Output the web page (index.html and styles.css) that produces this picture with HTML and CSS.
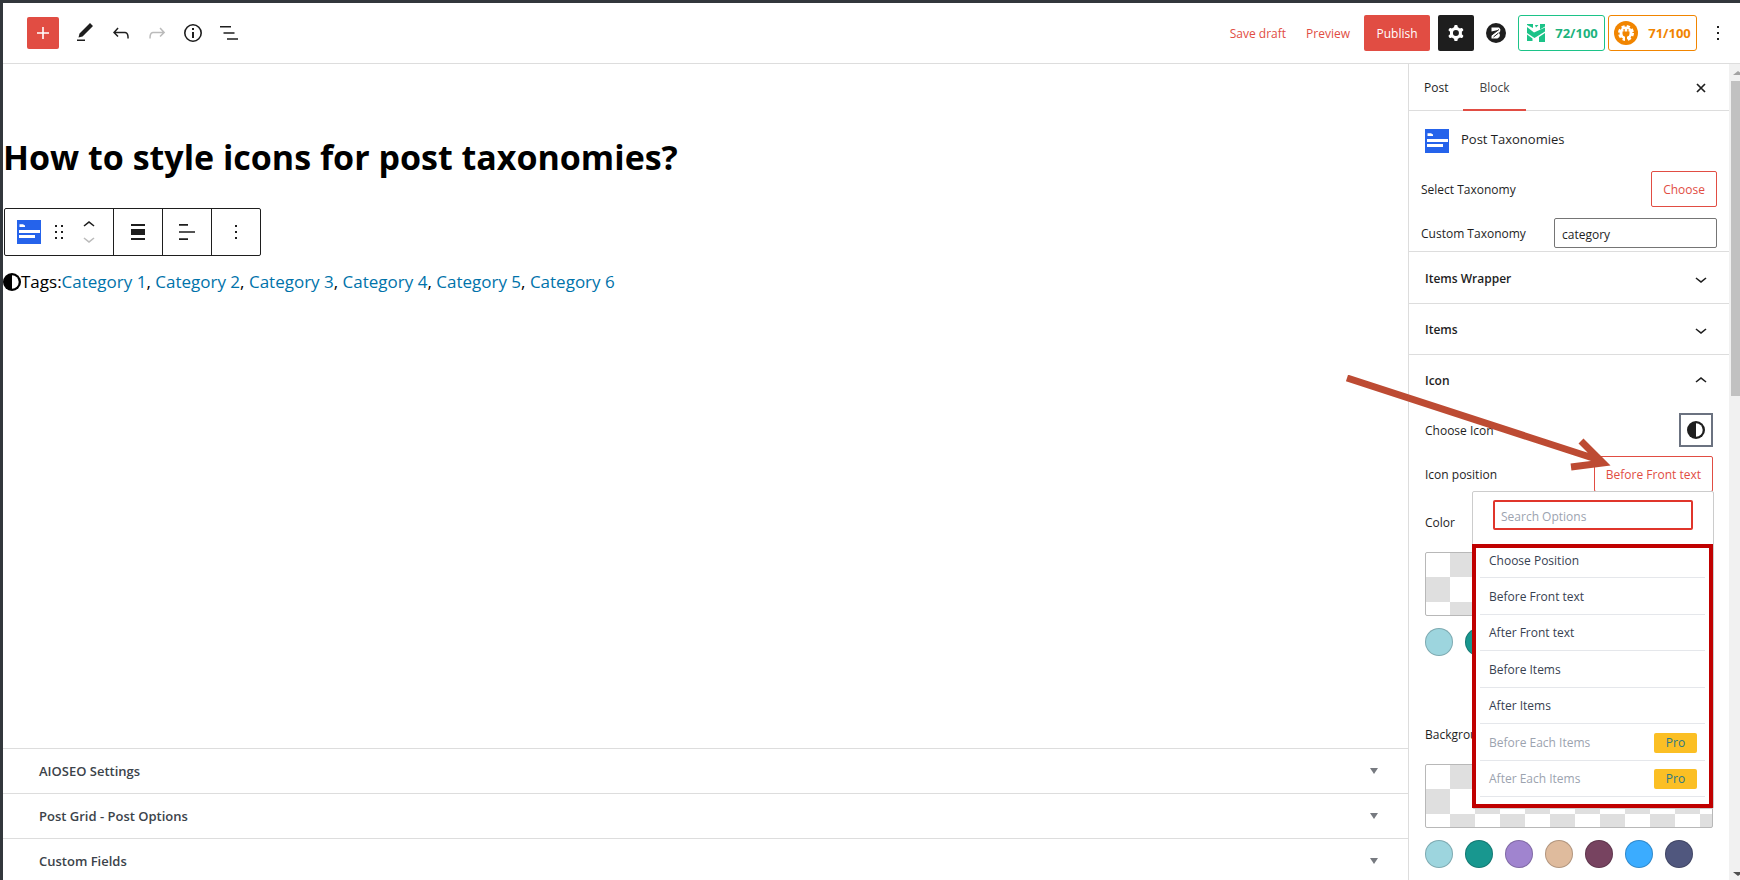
FILE: index.html
```html
<!DOCTYPE html>
<html lang="en">
<head>
<meta charset="utf-8">
<title>Edit Post</title>
<link rel="stylesheet" href="styles.css">
</head>
<body>
<svg class="defs" width="0" height="0" aria-hidden="true">
  <symbol id="tax" viewBox="0 0 24 24"><path fill="#2563eb" d="M0 0h24v24H0z"/><path fill="#fff" d="M2.500 7V4.300h3.500L8 5.500V7zM2 10h21v3H2zM2 15h16v3H2z"/></symbol>
  <symbol id="down" viewBox="0 0 24 24"><path d="M17.500 11.600 12 16l-5.500-4.400.9-1.200L12 14l4.500-3.600z"/></symbol>
  <symbol id="up" viewBox="0 0 24 24"><path d="M6.500 12.400 12 8l5.500 4.400-.9 1.200L12 10l-4.500 3.600z"/></symbol>
  <symbol id="more" viewBox="0 0 24 24"><path d="M13 19h-2v-2h2zM13 13h-2v-2h2zM13 7h-2V5h2z"/></symbol>
  <symbol id="half" viewBox="0 0 18 18"><circle cx="9" cy="9" r="9"/><path fill="#fff" d="M9 2.300a6.700 6.700 0 0 1 0 13.400z"/></symbol>
</svg>
<div class="app">
  <header class="topbar">
    <div class="tools">
      <button class="add" aria-label="Add block"><svg class="icon" viewBox="0 0 24 24"><path d="M18 11.200h-5.200V6h-1.600v5.200H6v1.600h5.200V18h1.600v-5.200H18z"/></svg></button>
      <button class="tool" aria-label="Tools"><svg class="icon" viewBox="0 0 24 24"><path d="m20 5-3-3L6.500 12.500l-1 4 4-1zM4 18.500h8V20H4z"/></svg></button>
      <button class="tool" aria-label="Undo"><svg class="icon" viewBox="0 0 24 24"><path d="M18.300 11.700c-.6-.6-1.400-.9-2.300-.9H6.700l2.900-3.300-1.100-1-4.500 5L8.500 16l1-1-2.700-2.700H16c.5 0 .9.2 1.300.5 1 1 1 3.400 1 4.500v.3h1.500v-.2c0-1.500 0-4.300-1.500-5.700z"/></svg></button>
      <button class="tool faded" aria-label="Redo"><svg class="icon" viewBox="0 0 24 24"><path d="M15.600 6.500l-1.100 1 2.900 3.300H8c-.9 0-1.700.3-2.300.9-1.400 1.500-1.400 4.200-1.400 5.600v.2h1.500v-.3c0-1.100 0-3.500 1-4.500.3-.3.7-.5 1.300-.5h9.200L14.500 15l1.100 1.100 4.600-4.600z"/></svg></button>
      <button class="tool" aria-label="Details"><svg class="icon" viewBox="0 0 24 24"><path fill-rule="evenodd" d="M12 3a9 9 0 1 0 0 18 9 9 0 0 0 0-18zm0 16.400a7.400 7.400 0 1 1 0-14.800 7.400 7.400 0 0 1 0 14.800zM11 17h2v-6h-2zM11 9h2V7h-2z"/></svg></button>
      <button class="tool" aria-label="List view"><svg class="icon" viewBox="0 0 24 24"><path d="M3 5h11v1.600H3zM6.500 11.200h11v1.600h-11zM10 17.200h11v1.600H10z"/></svg></button>
    </div>
    <div class="actions">
      <a class="draft" href="#">Save draft</a>
      <a class="preview" href="#">Preview</a>
      <button class="publish">Publish</button>
      <button class="settings" aria-label="Settings"><svg class="icon" viewBox="0 0 24 24"><path fill-rule="evenodd" d="M10.289 4.836A1 1 0 0111.275 4h1.306a1 1 0 01.987.836l.244 1.466c.787.26 1.503.679 2.108 1.218l1.393-.522a1 1 0 011.216.437l.653 1.130a1 1 0 01-.23 1.273l-1.148.944a6.025 6.025 0 010 2.435l1.149.946a1 1 0 01.23 1.272l-.653 1.130a1 1 0 01-1.216.437l-1.394-.522c-.605.54-1.320.958-2.108 1.218l-.244 1.466a1 1 0 01-.987.836h-1.306a1 1 0 01-.986-.836l-.244-1.466a5.995 5.995 0 01-2.108-1.218l-1.394.522a1 1 0 01-1.217-.436l-.653-1.131a1 1 0 01.23-1.272l1.149-.946a6.026 6.026 0 010-2.435l-1.148-.944a1 1 0 01-.23-1.272l.653-1.131a1 1 0 011.217-.437l1.393.522a5.994 5.994 0 012.108-1.218zM14.929 12a3 3 0 11-6 0 3 3 0 016 0z"/></svg></button>
      <button class="plugin" aria-label="Block plugin"><svg width="20" height="20" viewBox="0 0 20 20"><circle cx="10" cy="10" r="10" fill="#1e1e1e"/><path fill="#fff" d="M5.500 4.500H13q2.200 1.500 1.200 3.700L13 10q1.800 2 .4 4l-2 1.500H5.500v-3.300L12 7 5.500 8.500z"/><path stroke="#1e1e1e" stroke-width="1" fill="none" d="m5 12.500 8-6M7.500 14l5-4"/></svg></button>
      <button class="score good"><svg width="18" height="18" viewBox="0 0 18 18"><path fill="#1cc388" d="M0 0h6v4L0 1zM8 1h3.500L9 3.500zM13 0h5v2.500l-5 3zM0 3l7 5.500L18 3.500v4L7.500 14 0 9zM0 10.500l5.500 4V17H0zM12 13l6-4v9h-6z"/></svg>72/100</button>
      <button class="score fair"><svg width="24" height="24" viewBox="0 0 24 24"><circle cx="12" cy="12" r="12" fill="#f18500"/><circle cx="12" cy="12" r="6.500" fill="#fff"/><circle cx="12" cy="12" r="6.500" fill="none" stroke="#fff" stroke-width="3" stroke-dasharray="3 2.105"/><path fill="#f18500" d="M9.500 8h1.200v2.500h2.600V8h1.200v2.500h1V13q0 2-2.500 2.700V20h-2v-4.300Q8.500 15 8.500 13v-2.500h1z"/></svg>71/100</button>
      <button class="dots" aria-label="Options"><svg class="icon" viewBox="0 0 24 24"><use href="#more"/></svg></button>
    </div>
  </header>
  <div class="body">
    <main class="editor">
      <div class="canvas">
        <h1>How to style icons for post taxonomies?</h1>
        <div class="toolbar">
          <div class="group first">
            <svg class="icon"><use href="#tax"/></svg>
            <svg class="grip" width="8" height="14" viewBox="0 0 8 14"><path d="M0 0h2v2H0zM6 0h2v2H6zM0 6h2v2H0zM6 6h2v2H6zM0 12h2v2H0zM6 12h2v2H6z"/></svg>
            <div class="movers">
              <button aria-label="Move up"><svg width="24" height="16" viewBox="0 3 24 16"><use href="#up" width="24" height="24"/></svg></button>
              <button class="faded" aria-label="Move down"><svg width="24" height="16" viewBox="0 5 24 16"><use href="#down" width="24" height="24"/></svg></button>
            </div>
          </div>
          <button class="group" aria-label="Align"><svg class="icon" viewBox="0 0 24 24"><path d="M5 4h14v2H5zM5 9h14v6H5zM5 18h14v2H5z"/></svg></button>
          <button class="group" aria-label="Align text"><svg class="icon" viewBox="0 0 24 24"><path d="M4 4h9v1.700H4zM4 11.200h16v1.600H4zM4 18.300h9V20H4z"/></svg></button>
          <button class="group" aria-label="More"><svg class="icon" viewBox="0 0 24 24"><use href="#more"/></svg></button>
        </div>
        <p class="terms"><svg width="18" height="18"><use href="#half"/></svg><span>Tags:<a href="#">Category 1</a>, <a href="#">Category 2</a>, <a href="#">Category 3</a>, <a href="#">Category 4</a>, <a href="#">Category 5</a>, <a href="#">Category 6</a></span></p>
      </div>
      <div class="metabox"><button>AIOSEO Settings<svg width="8" height="6" viewBox="0 0 8 6"><path d="M0 0h8L4 6z"/></svg></button></div>
      <div class="metabox"><button>Post Grid - Post Options<svg width="8" height="6" viewBox="0 0 8 6"><path d="M0 0h8L4 6z"/></svg></button></div>
      <div class="metabox"><button>Custom Fields<svg width="8" height="6" viewBox="0 0 8 6"><path d="M0 0h8L4 6z"/></svg></button></div>
    </main>
    <aside class="side">
      <div class="panel">
        <nav class="tabs">
          <button>Post</button><button class="on">Block</button>
          <button class="close" aria-label="Close settings"><svg width="10" height="10" viewBox="0 0 10 10"><path d="m1 1 8 8M9 1 1 9" stroke="#1e1e1e" stroke-width="1.700"/></svg></button>
        </nav>
        <div class="card"><svg class="icon"><use href="#tax"/></svg><h2>Post Taxonomies</h2></div>
        <div class="field"><span>Select Taxonomy</span><button class="outline">Choose</button></div>
        <div class="field custom"><label for="tax-in">Custom Taxonomy</label><input id="tax-in" type="text" value="category"></div>
        <button class="fold wrapper">Items Wrapper<svg class="icon"><use href="#down"/></svg></button>
        <button class="fold">Items<svg class="icon"><use href="#down"/></svg></button>
        <button class="fold">Icon<svg class="icon"><use href="#up"/></svg></button>
        <section class="options">
          <div class="line"><span>Choose Icon</span><button class="pick" aria-label="Choose icon"><svg width="18" height="18"><use href="#half"/></svg></button></div>
          <div class="line position"><span>Icon position</span><button class="outline">Before Front text</button>
            <div class="menu">
              <div class="search"><input type="text" placeholder="Search Options" aria-label="Search Options"></div>
              <ul>
                <li>Choose Position</li>
                <li>Before Front text</li>
                <li>After Front text</li>
                <li>Before Items</li>
                <li>After Items</li>
                <li class="locked">Before Each Items<a href="#">Pro</a></li>
                <li class="locked">After Each Items<a href="#">Pro</a></li>
              </ul>
            </div>
          </div>
          <h3>Color</h3>
          <div class="checker"></div>
          <div class="swatches"><button class="c1" aria-label="Light teal"></button><button class="c2" aria-label="Teal"></button></div>
          <h3 class="second">Background</h3>
          <div class="checker"></div>
          <div class="swatches"><button class="c1" aria-label="Light teal"></button><button class="c2" aria-label="Teal"></button><button class="c3" aria-label="Purple"></button><button class="c4" aria-label="Sand"></button><button class="c5" aria-label="Plum"></button><button class="c6" aria-label="Blue"></button><button class="c7" aria-label="Indigo"></button></div>
        </section>
      </div>
      <div class="scroll">
        <svg width="7" height="4" viewBox="0 0 7 4"><path fill="#a3a3a3" d="M0 4h10L5 0z"/></svg>
        <div class="thumb"></div>
        <svg width="7" height="4" viewBox="0 0 7 4"><path fill="#505050" d="M0 0h10L5 4z"/></svg>
      </div>
      <svg class="pointer" width="270" height="100" viewBox="0 0 270 100"><path d="M3 3 252 84M237 66l22 22-32 4" fill="none" stroke="#bd4b33" stroke-width="7"/></svg>
    </aside>
  </div>
</div>
</body>
</html>
```
FILE: styles.css
```css
* { box-sizing: border-box; }
html, body { height: 100%; margin: 0; }
body { font: 13px/20px "Open Sans", "Noto Sans", sans-serif; color: #1e1e1e; background: #fff; overflow: hidden; }
button, input { font: inherit; color: inherit; margin: 0; }
button { background: none; border: 0; padding: 0; display: flex; align-items: center; justify-content: center; cursor: pointer; }
a { text-decoration: none; }
h1, h2, h3, p, ul { margin: 0; padding: 0; }
svg { display: block; flex: none; fill: currentColor; }
.defs { position: absolute; }
.icon { width: 24px; height: 24px; }
.faded { color: #bbb; }

.app { height: 100vh; display: flex; flex-direction: column; border-top: 3px solid #32373c; border-left: 3px solid #32373c; }
.topbar { flex: none; height: 61px; display: flex; justify-content: space-between; align-items: center; border-bottom: 1px solid #ddd; padding: 0 10px 0 24px; }
.tools, .actions { display: flex; align-items: center; }
.tools { gap: 12px; }
.add { width: 32px; height: 32px; background: #e14d43; color: #fff; border-radius: 2px; margin-right: 2px; }
.tool { width: 24px; height: 24px; }
.actions { font-size: 12px; }
.draft, .preview { color: #e14d43; padding-top: 1px; }
.draft { margin-right: 20px; }
.preview { margin-right: 14px; }
.publish { width: 66px; height: 36px; padding-top: 1px; background: #e14d43; color: #fff; border-radius: 2px; margin-right: 8px; }
.settings { width: 36px; height: 36px; background: #1e1e1e; color: #fff; border-radius: 2px; margin-right: 12px; }
.plugin { margin-right: 12px; }
.score { height: 36px; border: 1px solid; border-radius: 3px; font-size: 13px; font-weight: 700; }
.good { width: 87px; color: #1cb37d; border-color: #1cc388; gap: 10px; padding-left: 2px; margin-right: 3px; }
.fair { width: 89px; color: #f18500; gap: 10px; margin-right: 9px; }
.dots { width: 24px; }

.body { flex: 1; min-height: 0; display: flex; }
.editor { flex: 1; min-width: 0; display: flex; flex-direction: column; }
.canvas { flex: 1; padding-top: 66px; }
h1 { font-size: 34px; line-height: 54px; font-weight: 700; color: #000; white-space: nowrap; }
.toolbar { display: flex; width: max-content; height: 48px; margin: 24px 0 0 1px; border: 1px solid #1e1e1e; border-radius: 2px; }
.group { width: 49px; border-left: 1px solid #1e1e1e; }
.first { display: flex; align-items: center; width: 108px; padding-left: 12px; border-left: 0; }
.grip { margin-left: 14px; }
.movers { margin-left: 14px; display: flex; flex-direction: column; }
.terms { display: flex; align-items: center; margin-top: 12px; font-size: 17px; line-height: 28px; color: #000; white-space: nowrap; }
.terms a { color: #0073aa; }
.metabox { flex: none; height: 45px; border-top: 1px solid #ddd; }
.metabox:last-child { height: 42px; }
.metabox button { width: 100%; height: 44px; justify-content: space-between; padding: 0 30px 0 36px; font-weight: 600; color: #3c434a; }
.metabox svg { color: #777a80; }

.side { flex: none; width: 332px; display: flex; position: relative; border-left: 1px solid #ddd; }
.panel { flex: 1; min-width: 0; font-size: 12px; }
.tabs { display: flex; height: 47px; border-bottom: 1px solid #ddd; font-weight: 500; }
.tabs button { padding: 0 15px; height: 47px; }
.tabs .on { border-bottom: 2px solid #e14d43; color: #444; padding: 2px 16px 0; }
.tabs .close { margin-left: auto; padding: 0 23px; }
.card { display: flex; gap: 12px; padding: 18px 16px; }
.card h2 { font-size: 13px; line-height: 20px; font-weight: 500; }
.field { display: flex; justify-content: space-between; align-items: center; padding: 0 12px; }
.field > span, .field > label { padding-top: 1px; }
.outline { height: 36px; padding: 1px 11px 0; border: 1px solid #e14d43; border-radius: 2px; color: #e14d43; }
.field input { width: 163px; height: 30px; border: 1px solid #757575; border-radius: 2px; padding: 2px 7px 0; }
.custom { margin: 11px 0 3px; }
.fold { width: 100%; height: 51px; border-top: 1px solid #ddd; justify-content: space-between; padding: 2px 16px 0; font-weight: 600; }
.wrapper { height: 52px; }
.options { padding: 8px 16px 0; }
.line { display: flex; justify-content: space-between; align-items: center; }
.line > span { padding-top: 1px; }
.pick { width: 34px; height: 34px; border: 2px solid #6b7280; }
.position { position: relative; margin-top: 9px; }
.menu { position: absolute; z-index: 1; top: 35px; right: -1px; width: 242px; background: #fff; border: 1px solid #ccc; border-radius: 2px; }
.search { padding: 8px 20px 14px; }
.search input { width: 100%; height: 30px; padding: 2px 6px 0; border: 2px solid #e0352b; border-radius: 2px; background: #fff; }
.search input::placeholder { color: #9ca3af; opacity: 1; }
.menu ul { margin: 0 0 0 -1px; width: 241px; height: 264px; border: 4px solid #c00000; padding: 0 4px; list-style: none; }
.menu li { height: 36px; display: flex; align-items: center; justify-content: space-between; padding: 0 8px 0 9px; border-bottom: 1px solid #e5e7eb; color: #374151; margin-bottom: 1px; }
.menu li:first-child { height: 30px; padding-bottom: 4px; }
.menu li:nth-child(even) { margin-bottom: 0; }
.menu .locked { color: #9ca3af; }
.locked a { width: 43px; height: 20px; border-radius: 2px; background: #fbbf24; color: #2a7885; text-align: center; line-height: 20px; }
h3 { font-size: 12px; font-weight: 400; line-height: 20px; margin: 21px 0 19px; }
h3.second { margin: 69px 0 19px; }
.checker { height: 64px; border: 1px solid #b8b8b8; border-radius: 2px; background: conic-gradient(#fff 25%, #dfdfdf 0 50%, #fff 0 75%, #dfdfdf 0) 24px -1px / 50px 50px; }
.swatches { display: flex; gap: 12px; margin-top: 12px; }
.swatches button { width: 28px; height: 28px; border-radius: 50%; border: 1px solid rgba(0, 0, 0, .2); }
.c1 { background: #9dd5de; }
.c2 { background: #18978f; }
.c3 { background: #a084cf; }
.c4 { background: #dfbb9d; }
.c5 { background: #774360; }
.c6 { background: #3bacff; }
.c7 { background: #50577e; }
.scroll { flex: none; width: 11px; background: #f1f1f1; display: flex; flex-direction: column; align-items: flex-end; padding: 7px 0 4px; overflow: hidden; }
.thumb { flex: none; width: 9px; height: 315px; margin: 6px 0 auto; background: #c1c1c1; }
.pointer { position: absolute; z-index: 2; left: -65px; top: 311px; }
```
